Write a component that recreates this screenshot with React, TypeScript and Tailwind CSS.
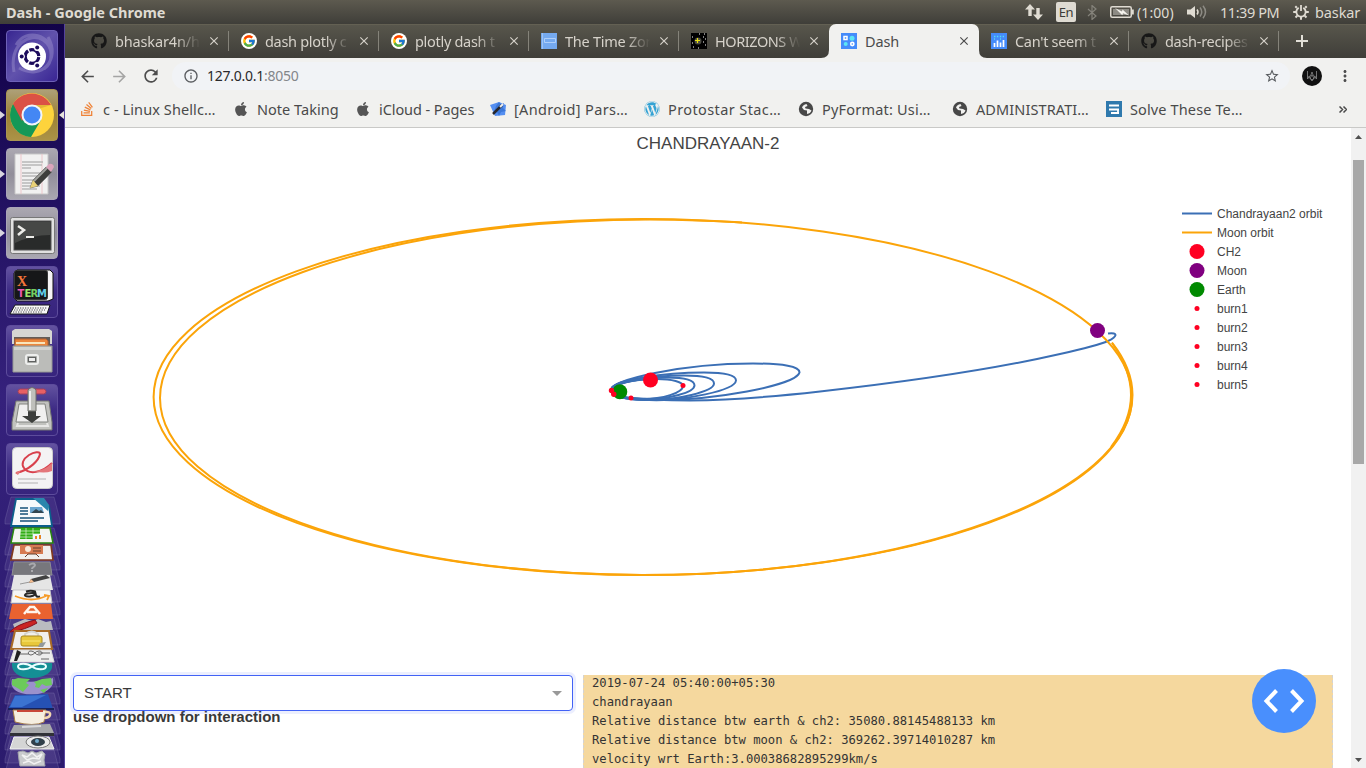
import type { ReactNode } from "react";
import { FaApple, FaGithub, FaStackOverflow, FaWordpress } from "react-icons/fa";
import { FcGoogle } from "react-icons/fc";
import {
  MdArrowBack,
  MdArrowForward,
  MdClose,
  MdInfoOutline,
  MdMoreVert,
  MdRefresh,
  MdStarBorder,
} from "react-icons/md";

/* ---------- system bar ---------- */

function SystemBar() {
  return (
    <header className="flex h-6 shrink-0 items-center bg-gradient-to-b from-[#5d5a4f] to-[#3f3e39] pl-1.5 text-[14px] leading-[23px] text-[#dfdbd2]">
      <span className="w-[400px] text-[14.500px] font-bold tracking-[0px]">Dash - Google Chrome</span>
      <div className="ml-auto flex items-center whitespace-nowrap">
        <svg className="mr-[13px] h-[16px] w-[18px]" viewBox="0 0 18 16" fill="#dfdbd2">
          <path d="M5 0 10 5.500H6.700V12H3.300V5.500H0z" />
          <path d="M13 16 8 10.500h3.300V4h3.400v6.500H18z" />
        </svg>
        <span className="mr-[11px] flex h-5 w-5 items-center justify-center rounded-[2px] bg-[#dfdbd2] text-[13px] tracking-[-0.5px] text-[#3c3b37]">En</span>
        <svg className="mr-[13px] h-[15px] w-[10px]" viewBox="0 0 10 15" fill="none" stroke="#85837b" strokeWidth="1.200"><path d="m1 4 8 7-4 3.500V.5L9 4l-8 7" /></svg>
        <svg className="mr-[3px] h-3 w-6" viewBox="0 0 24 12">
          <rect x=".75" y=".75" width="20.500" height="10.500" rx="1.500" fill="none" stroke="#dfdbd2" strokeWidth="1.500" />
          <rect x="3" y="3" width="16" height="6" fill="#8d8b84" />
          <rect x="22" y="3.500" width="1.800" height="5" fill="#dfdbd2" />
          <path d="m5 2 7 3.400.5-2L19 9.500l-6-2.300-.7 2z" fill="#f6f4ee" />
        </svg>
        <span className="w-[50px] text-[14px] tracking-[0.1px]">(1:00)</span>
        <svg className="mr-[13px] h-[14px] w-5" viewBox="0 0 20 14">
          <path d="M0 4.500h3.500L8 1v12L3.500 9.500H0z" fill="#dfdbd2" />
          <path d="M10 4.500q2 2.500 0 5" fill="none" stroke="#dfdbd2" strokeWidth="1.500" />
          <path d="M13 2.500q3.500 4.500 0 9M16 .8q5 6.200 0 12.400" fill="none" stroke="#8d8b84" strokeWidth="1.500" />
        </svg>
        <span className="w-[73px] text-[14.500px] tracking-[-0.45px]">11:39 PM</span>
        <svg className="mr-[6px] h-4 w-4" viewBox="0 0 16 16" fill="none" stroke="#dfdbd2">
          <path d="M5.700 3.900a4.700 4.700 0 1 0 4.600 0" strokeWidth="1.900" />
          <path d="M8 1v6" strokeWidth="1.800" />
          <path d="M3.800 3.800 2.300 2.300M12.200 3.800l1.500-1.500M3 8H.2M13 8h2.800M4.300 11.700l-1.800 1.800M11.700 11.700l1.800 1.800M8 13v2.800" strokeWidth="2" />
        </svg>
        <span className="w-[51px] text-[14.500px] tracking-[-0.1px]">baskar</span>
      </div>
    </header>
  );
}

/* ---------- launcher ---------- */

function Tile({ tone, left, right, children }: { tone: string; left?: boolean; right?: boolean; children: ReactNode }) {
  return (
    <div className="flex h-[52px] shrink-0 items-center">
      <span className="w-1.5 text-[#d8d5df]">
        {left && (
          <svg className="h-2 w-[5px]" viewBox="0 0 5 8">
            <path d="M0 0 5 4 0 8z" fill="currentColor" />
          </svg>
        )}
      </span>
      <div className={"h-[52px] w-[52px] overflow-hidden rounded-[4px] border " + tone}>
        <svg className="h-[50px] w-[50px]" viewBox="1 1 50 50">
          {children}
        </svg>
      </div>
      {right && (
        <svg className="ml-[1px] h-2 w-[5px]" viewBox="0 0 5 8">
          <path d="M5 0 0 4l5 4z" fill="#e7e4dc" />
        </svg>
      )}
    </div>
  );
}

const plain = "border-[#5d4c9c] bg-gradient-to-b from-[#6352a0] via-[#3d2a84] to-[#37247d]";
const silver = "border-[#aaa5b8] bg-gradient-to-b from-[#aba8b1] via-[#918e9a] to-[#aaa8b1]";

function LauncherStack() {
  const tops = [0, 31, 46, 63, 78, 91, 105, 121, 134, 151, 163, 180, 196, 210, 226, 239, 253];
  return (
    <svg className="h-[272px] w-[64px] shrink-0" viewBox="0 496 64 272">
      {tops.map((t) => (
        <path key={t} d={`M11 ${497 + t}H54L60 ${520 + t}V${524 + t}H5V${520 + t}Z`} fill="#7b70b0" fillOpacity=".2" stroke="#9b92c4" strokeOpacity=".25" />
      ))}
      <path d="M16 499h24l9 7 3 20H11z" fill="#f7f9fb" stroke="#0b5e8b" strokeWidth="1.800" />
      <path d="M33 498h11l5 7-1 6z" fill="#2b86ac" />
      <path d="M20 508h8M20 511h8M20 514h8M20 518h24M20 521h18" stroke="#17517a" strokeWidth="1.300" />
      <path d="M30 507h12l2 6H30z" fill="#6ba5cf" /><path d="m31 513 5-4 3 2 2-1 3 3z" fill="#324651" />
      <path d="M14 528h36l3 15H11z" fill="#f3f5f0" stroke="#28870d" strokeWidth="1.500" />
      <path d="M21 528h19v11H20z" fill="#30ad15" /><path d="M20 531h20M20 534h20M20 537h20M26 528v11M33 528v11" stroke="#dff5d9" strokeWidth=".7" />
      <path d="M33 534h10v6H33z" fill="#edf6ff" /><path d="M35 539v-3h2v3zM39 539v-4h2v4z" fill="#e68621" />
      <path d="M14 545h37l2 15H11z" fill="#f1eeec" stroke="#81391e" strokeWidth="1.700" />
      <path d="M20 545h23v9H20z" fill="#d77a51" /><circle cx="28" cy="549" r="3" fill="#fae8d9" /><path d="M33 548h8M33 551h8M25 557l3-3h8l3 3" stroke="#68402d" fill="none" />
      <path d="M14 562h36l2 13H12z" fill="#77777c" stroke="#8d8d93" /><path d="M29 565q5-3 6 0c0 2-3 2-3 4m0 1v2" fill="none" stroke="#a9a9ad" strokeWidth="2" />
      <path d="M14 575h36l3 15H11z" fill="#e5e5e5" /><path d="m20 584 10-2" stroke="#999" /><path d="m29 583 2-4 15-4 4 3-16 4z" fill="#414141" /><path d="m29 583 2-4 3 3z" fill="#f4bc8f" />
      <path d="M13 590h37l2 13H11z" fill="#f5f5f5" stroke="#c5c5c7" />
      <path d="M26 591.500q5-1.500 9 0l1 4q1 2 4 1M35 593c-6-.5-11 1-10 2.500 2 2 8 1 10-1" fill="none" stroke="#282828" strokeWidth="2" />
      <path d="M15 596q17 7 31 0m-2-1 5 1-2 4" fill="none" stroke="#f69b28" strokeWidth="1.800" />
      <path d="M12 604h39l2 15H9z" fill="#e96230" /><path d="m24 614 6-7h4l6 7M27 612h10" fill="none" stroke="#fff5ec" strokeWidth="2.500" />
      <path d="m13 624 12-5 8 2 5-2 8 3 5-1 2 9H15z" fill="#b9bbc0" /><path d="m10 632q5-7 25-12l2 3q-12 7-27 9z" fill="#ca2424" stroke="#851220" />
      <path d="M15 631h34l3 18H11z" fill="#f1efeb" stroke="#a96b26" strokeWidth="2" /><path d="M25 639v-5q7-5 13 0v5" fill="none" stroke="#d4d4ce" strokeWidth="2" /><rect x="21" y="636" width="21" height="10" rx="2" fill="#e8c83c" stroke="#a9871c" /><path d="M22 641h18" stroke="#f8e774" /><path d="m40 643 6-1-3 5h-5z" fill="#92999c" />
      <path d="M14 650h37l3 12H10z" fill="#ededed" stroke="#d9d9d9" /><path d="m14 661 3-11 4 2-4 9z" fill="#202020" /><path d="M20 654h9M38 653h12M41 659h8M31 651c-4 0-3 4 0 4s4-4 8-4 4 4 0 4-4-4-8-4" stroke="#444" fill="none" strokeWidth=".8" />
      <path d="M12 663h40q2 10-12 14-8 2-17 0-12-4-11-14z" fill="#148e95" /><path d="M32 666.500c-5-4-14-3.500-14 0s9 4 14 0c5-4 14-3.500 14 0s-9 4-14 0z" fill="none" stroke="#eaffff" strokeWidth="2" />
      <path d="M12 679q20 6 41-1 2 10-11 15-10 3-21 0-12-4-9-14z" fill="#9b91cc" /><path d="m12 680 6-2 12 1-4 4 3 2-6 7-4-3-7-4zm22 2 8-3 9-1 1 7-6 1-4-2-3 4-4-1 1-3zM40 690l8-2-4 5z" fill="#6cca5b" />
      <path d="m15 695 33-1 5 15H8z" fill="#2551b4" /><path d="m15 696 31-1-24 12H10z" fill="#3b73d2" /><path d="M8 708h46v2H8z" fill="#17215a" />
      <path d="M13 710h33l-2 12q-10 5-29 0z" fill="#f5eee0" stroke="#a67b45" /><path d="M45 712c8-1 6 6-1 6" fill="none" stroke="#f3d7b0" strokeWidth="2.500" /><path d="M17 711h26" stroke="#c84637" strokeWidth="2" />
      <path d="m14 725 36-1 4 9H10z" fill="#a7a8ab" /><path d="M10 733h44v3H10z" fill="#303137" /><path d="m22 727 19-1" stroke="#d9d9db" strokeWidth="2" />
      <path d="M14 737h35l5 12H10z" fill="#d5d5d5" stroke="#f2f2f2" /><ellipse cx="38" cy="742" rx="12" ry="6" fill="#ececec" stroke="#797979" /><ellipse cx="38" cy="742" rx="7" ry="4" fill="#303f4a" /><circle cx="37" cy="741" r="2" fill="#6fa9cb" />
      <path d="m18 752 5-1 5 2 4-2 4 2 6-2 3 3-1 6 1 6H20l-1-6z" fill="#c9cbcd" stroke="#a2a5ac" /><path d="m22 755 5 2 5-4 5 4 5-3-3 5-6-1-6 2zM23 763l6-2 5 3 7-3" fill="none" stroke="#f2f3f3" strokeWidth="1.500" />
    </svg>
  );
}

function Launcher() {
  return (
    <aside className="flex w-[65px] shrink-0 flex-col gap-[7px] overflow-hidden border-r border-[#54429c] bg-gradient-to-b from-[#120349] via-[#35217c] to-[#2b1b6d] pt-1.5">
      <Tile tone="border-[#6e61b8] bg-gradient-to-br from-[#392691] via-[#6152ac] to-[#3a2494]">
        <path d="M8 42C3 14 24 2 37 10c11 7 10 23 1 29M42 7C55 29 36 51 13 38M10 15C20-3 46 5 46 24" fill="none" stroke="#9d92cf" strokeWidth="3" opacity=".45" />
        <circle cx="26" cy="26.500" r="14" fill="#fff" />
        <circle cx="26" cy="26.500" r="6.800" fill="none" stroke="#1c0b5c" strokeWidth="3.200" strokeDasharray="12.800 1.440" strokeDashoffset="-0.7" />
        <circle cx="16" cy="26.500" r="2.900" fill="#fff" /><circle cx="31" cy="18" r="2.900" fill="#fff" /><circle cx="31" cy="35" r="2.900" fill="#fff" />
        <circle cx="15.700" cy="26.500" r="2" fill="#1c0b5c" /><circle cx="31.200" cy="17.500" r="2" fill="#1c0b5c" /><circle cx="31.200" cy="35.500" r="2" fill="#1c0b5c" />
      </Tile>
      <Tile tone="border-[#a99553] bg-gradient-to-b from-[#ada078] via-[#9c8134] to-[#ab9347]" left right>
        <circle cx="26" cy="26" r="22" fill="#fdd33c" />
        <path d="M26 26 7 15a22 22 0 0 0 18 33l10-17z" fill="#159857" />
        <path d="M7 15a22 22 0 0 1 38 1H26l-10 16z" fill="#db5145" />
        <path d="M45 16H26v6z" fill="#bd8d2c" opacity=".4" />
        <circle cx="26" cy="26" r="10.500" fill="#f3f5f8" /><circle cx="26" cy="26" r="8.500" fill="#4487f4" />
      </Tile>
      <Tile tone={silver} left>
        <path d="M9 6h33v40H9z" fill="#f1f1f1" stroke="#c7c7c7" />
        <path d="M15 6v40M36 6v40" stroke="#efbec3" strokeWidth=".8" />
        <path d="M16 14h21M16 17h20M16 20h9M16 25h21M16 28h18M16 32h13M16 35h19M16 38h18M16 41h15" stroke="#b8b8b8" strokeWidth="1.300" />
        <path d="m24 40 3-8 13-13 6 5-14 14z" fill="#3d3e3b" stroke="#777" strokeWidth=".8" /><path d="m28 33 13-13" stroke="#a0a19d" strokeWidth="2" />
        <path d="m40 19 3-3q4-1 5 3l-3 5z" fill="#dba4bc" /><path d="m24 40 3-8 5 6z" fill="#e9d277" />
      </Tile>
      <Tile tone={silver} left>
        <rect x="4.500" y="10.500" width="44" height="36" rx="2" fill="#e1e1e0" stroke="#777" /><rect x="8" y="14" width="37" height="29" fill="#292b2a" stroke="#555" />
        <path d="M9 15h35v13q-18 0-35 8z" fill="#464846" /><path d="m12 19 6 4-6 5" fill="none" stroke="#ecece8" strokeWidth="2.500" /><path d="M20 30h8" stroke="#ecece8" strokeWidth="2" />
      </Tile>
      <Tile tone={plain}>
        <path d="M11 4h33l3 3v26l-5 2H11l-3-3V7z" fill="#f5f4f5" stroke="#111" /><rect x="8.500" y="4.500" width="33" height="29" rx="2" fill="#161718" stroke="#383838" />
        <text x="11" y="20" fill="#f6773a" fontFamily="Liberation Serif" fontSize="14" fontWeight="bold">X</text>
        <text y="30.500" fontFamily="DejaVu Sans" fontSize="10" fontWeight="bold"><tspan x="11.500" fill="#ee57b5">T</tspan><tspan x="18.500" fill="#a0e66c">E</tspan><tspan x="24.500" fill="#73ce61">R</tspan><tspan x="31" fill="#63cfe8">M</tspan></text>
        <path d="M9 39h35l-3 9H4z" fill="#f9f9f7" stroke="#17181a" /><path d="M9 42h32M8 44h31M7 46h30" stroke="#46464d" strokeDasharray="1.300 1.200" />
      </Tile>
      <Tile tone={plain}>
        <path d="m6 6 3-2h34l3 2v13H6z" fill="#d6d6d2" /><path d="M8 12h36v10H8z" fill="#625d58" /><path d="M9 14h31l2 2v6H9z" fill="#eb873b" stroke="#b86330" /><path d="M10 18h29" stroke="#f9e5bb" strokeWidth="2" />
        <path d="M7 21h39v26H7z" fill="#bbbcb9" stroke="#969894" /><path d="M8 22h37v3H8z" fill="#d2d3cf" />
        <rect x="20" y="30" width="12" height="9" rx="2" fill="#a8aaa7" stroke="#edeeed" strokeWidth="2" /><rect x="22.500" y="32.500" width="7" height="4" fill="#eee" stroke="#5f6160" />
      </Tile>
      <Tile tone={plain}>
        <path d="M10 17h33l3 21v8H6v-8z" fill="#c1c2be" stroke="#747672" /><path d="M13 20h26l3 18H10z" fill="#f0f0ef" stroke="#828480" />
        <rect x="12" y="5" width="28" height="5" rx="2.500" fill="#e86164" stroke="#a33f5d" /><path d="M22 25h8v7h5l-9 7-10-7h6z" fill="#3c3e3b" /><path d="M22 6q4-5 8 0v21h-8z" fill="#bfc0bb" stroke="#6e706b" /><path d="M24 7v19" stroke="#eee" strokeWidth="2" />
        <path d="m12 39-1 3h31l-1-3" fill="none" stroke="#e8e8e6" strokeWidth="2" />
      </Tile>
      <Tile tone={plain}>
        <rect x="6.500" y="4.500" width="40" height="41" rx="4" fill="#f4f3f4" stroke="#ccc" /><path d="M12 36h28M12 40h20" stroke="#c8c8c8" strokeWidth="1.300" />
        <path d="M10 30C24 27 33 17 34 11c0-3-6-2-11 1-6 4-8 9-5 13 5 7 18 5 28-5" fill="none" stroke="#d8404c" strokeWidth="2" />
        <path d="m9 30 6-3-3 5zM28 28q10 0 18-8v8q-8 3-18 0z" fill="#e4777b" />
      </Tile>
      <div className="-mt-[6px] shrink-0"><LauncherStack /></div>
    </aside>
  );
}

/* ---------- browser chrome ---------- */

const GoogleMark = () => (
  <span className="flex h-4 w-4 items-center justify-center rounded-full bg-white"><FcGoogle className="h-[14px] w-[14px]" /></span>
);
const Globe = () => (
  <svg className="h-4 w-4" viewBox="0 0 16 16">
    <circle cx="8" cy="8" r="7.200" fill="#484848" />
    <path d="M8.500 3q-3.500.5-4.500 3.500l2 2.500 3 .5V13q3.500-.5 4.500-3.500L11 8 7.500 7.500 7 6l2.500-1z" fill="#f1f1ef" />
  </svg>
);
const BlueBook = () => (
  <svg className="h-4 w-4" viewBox="0 0 16 16"><path fill="#75aaf0" d="M0 0h16v16H0z" /><path d="M1.500 0v16" stroke="#9dc4f6" /><path d="M3.500 5.500h11v4h-11z" fill="none" stroke="#b0d0fa" /></svg>
);
const StarField = () => (
  <svg className="h-4 w-4" viewBox="0 0 16 16"><path fill="#000" d="M0 0h16v16H0z" /><circle cx="7" cy="8" r="3.500" fill="#4b4b44" /><path d="M6.500 5v5M4 7.500h5" stroke="#e8e213" strokeWidth="1.200" /><path d="M1 4h1M8 1h1M13 1h1M12 4h1M14 6h1M12 9h1M2 14h1M7 15h1M14 12h1M1 10h1" stroke="#fff" /></svg>
);
const DashMark = () => (
  <svg className="h-4 w-4" viewBox="0 0 16 16"><path fill="#458bfa" d="M0 0h16v16H0z" /><path d="M3 3.500h3V6.500H3z" fill="none" stroke="#fff" strokeWidth="1.500" /><circle cx="11" cy="5.200" r="2.500" fill="#5be5f5" /><circle cx="4.700" cy="11" r="2" fill="#5be5f5" /><circle cx="11.300" cy="11" r="1.600" fill="none" stroke="#fff" strokeWidth="1.600" /></svg>
);
const PlotlyMark = () => (
  <svg className="h-4 w-4" viewBox="0 0 16 16"><path fill="#458bfa" d="M0 0h16v16H0z" /><path d="M3.500 14v-4M6.500 14V7.500M9.500 14V9.500M12.500 14V7" stroke="#fff" strokeWidth="1.700" /><path d="M3 3.500h10M3 6h1M9 6h1" stroke="#56dcf5" strokeWidth="1.300" strokeDasharray="1.400 1.500" /></svg>
);

function Tab({ icon, title, active, track, divider }: { icon: ReactNode; title: string; active?: boolean; track: string; divider?: boolean }) {
  return (
    <div className={"relative flex h-[34px] w-[150px] shrink-0 items-center pl-3 " + (active ? "z-10 rounded-t-[7px] bg-[#f1f1ef] text-[#4b4b4b]" : "text-[#d6d2ca]")}>
      {active && (
        <>
          <svg className="absolute -left-2 bottom-0 h-2 w-2" viewBox="0 0 8 8"><path d="M8 0v8H0q8 0 8-8" fill="#f1f1ef" /></svg>
          <svg className="absolute -right-2 bottom-0 h-2 w-2" viewBox="0 0 8 8"><path d="M0 0v8h8Q0 8 0 0" fill="#f1f1ef" /></svg>
        </>
      )}
      <span className="flex w-6 shrink-0">{icon}</span>
      <span className={"mb-px w-[87px] whitespace-nowrap text-[14.500px] leading-5 " + track + (active ? "" : " [mask-image:linear-gradient(90deg,#000_70%,transparent_98%)]")}>{title}</span>
      <MdClose className="ml-[5px] h-[14px] w-[14px] shrink-0" />
      {divider && <span className="ml-auto h-5 w-px bg-[#85837a]" />}
    </div>
  );
}

function TabStrip() {
  return (
    <div className="flex h-[34px] shrink-0 border-t border-[#636053] bg-gradient-to-b from-[#58564c] to-[#3f3e39] pl-[14px]">
      <div className="-mt-px flex">
        <Tab icon={<FaGithub className="h-4 w-4 text-[#171717]" />} title="bhaskar4n/h" track="tracking-[-0.15px]" divider />
        <Tab icon={<GoogleMark />} title="dash plotly c" track="tracking-[-0.3px]" divider />
        <Tab icon={<GoogleMark />} title="plotly dash t" track="tracking-[-0.3px]" divider />
        <Tab icon={<BlueBook />} title="The Time Zor" track="tracking-[-0.25px]" divider />
        <Tab icon={<StarField />} title="HORIZONS W" track="tracking-[-0.45px]" />
        <Tab icon={<DashMark />} title="Dash" track="tracking-[-0.1px]" active />
        <Tab icon={<PlotlyMark />} title="Can't seem t" track="tracking-[-0.3px]" divider />
        <Tab icon={<FaGithub className="h-4 w-4 text-[#171717]" />} title="dash-recipes" track="tracking-[-0.3px]" divider />
      </div>
      <svg className="ml-[17px] mt-[10px] h-3 w-3" viewBox="0 0 12 12"><path d="M6 0v12M0 6h12" stroke="#e2dfd7" strokeWidth="2" /></svg>
    </div>
  );
}

function Toolbar() {
  return (
    <div className="flex h-9 shrink-0 items-center bg-[#f1f1ef] pl-[13px] text-[#4d4d4d]">
      <MdArrowBack className="h-[19px] w-[19px]" />
      <MdArrowForward className="ml-[13px] h-[19px] w-[19px] text-[#a5a5a4]" />
      <MdRefresh className="ml-[12px] h-5 w-5" />
      <div className="ml-[11px] flex h-7 w-[1118px] items-center rounded-full bg-[#f1f3f6] pl-[11px] pr-[10px]">
        <MdInfoOutline className="h-4 w-4 text-[#5a5d61]" />
        <span className="ml-[8px] text-[14px] leading-5 tracking-[-0.25px] text-[#29292b]">127.0.0.1<span className="text-[#83868a]">:8050</span></span>
        <MdStarBorder className="ml-auto h-4 w-4 text-[#56595d]" />
      </div>
      <svg className="ml-[12px] h-5 w-5" viewBox="0 0 20 20"><circle cx="10" cy="10" r="10" fill="#111" /><path d="M5.500 5v8l4-5 .5-2 .5 2 4 5V5M5.500 10l4.500 4 4.500-4M8 12l2-3 2 3-2 3z" fill="none" stroke="#8d8d8d" strokeWidth=".8" /></svg>
      <MdMoreVert className="ml-[14px] h-[18px] w-[18px]" />
    </div>
  );
}

function Bookmark({ icon, title, box }: { icon: ReactNode; title: string; box: string }) {
  return (
    <div className={"flex shrink-0 items-center whitespace-nowrap " + box}>
      <span className="flex w-6 shrink-0">{icon}</span>
      <span>{title}</span>
    </div>
  );
}

function BookmarkBar() {
  return (
    <div className="flex h-[34px] shrink-0 items-center border-b border-[#c9c9c7] bg-[#f1f1ef] pb-[3px] pl-[14px] text-[14.500px] leading-5 text-[#4a4a4a]">
      <Bookmark icon={<FaStackOverflow className="h-4 w-4 text-[#ef8236]" />} title="c - Linux Shellc…" box="w-[154px] tracking-[0.1px]" />
      <Bookmark icon={<FaApple className="h-4 w-4 text-[#555]" />} title="Note Taking" box="w-[122px] tracking-[0.02px]" />
      <Bookmark icon={<FaApple className="h-4 w-4 text-[#555]" />} title="iCloud - Pages" box="w-[135px] tracking-[-0.08px]" />
      <Bookmark
        icon={<svg className="h-4 w-4" viewBox="0 0 16 16"><path d="m0 4 9-3 7 3-1 10-10 1z" fill="#558ff1" /><path d="m6 5 3-4 2 3 3-2-1 5 3 3-5 1-2 4-2-4-4 2 2-5z" fill="#3b77d8" /><path d="M3 13 12 4" stroke="#26262b" strokeWidth="2.500" /><path d="m10 6 3-3" stroke="#eee" strokeWidth="2" /></svg>}
        title="[Android] Pars…"
        box="w-[154px] tracking-[0.35px]"
      />
      <Bookmark icon={<FaWordpress className="h-4 w-4 text-[#35a3d4]" />} title="Protostar Stac…" box="w-[154px] tracking-[0.4px]" />
      <Bookmark icon={<Globe />} title="PyFormat: Usi…" box="w-[154px] tracking-[0.2px]" />
      <Bookmark icon={<Globe />} title="ADMINISTRATI…" box="w-[154px] tracking-[0.1px]" />
      <Bookmark icon={<svg className="h-4 w-4" viewBox="0 0 16 16"><path d="M0 0h16v16H0z" fill="#2f79ad" /><path d="M3 4.500h10M3 8.500h10M5 12h8M12 8v4" stroke="#fff" strokeWidth="1.800" /></svg>} title="Solve These Te…" box="w-[154px] tracking-[0.13px]" />
      <svg className="ml-auto mr-[19px] h-[7px] w-[8px]" viewBox="0 0 8 7" fill="none" stroke="#4a4a4a" strokeWidth="1.500"><path d="m.5.5 3 3-3 3M4.500.5l3 3-3 3" /></svg>
    </div>
  );
}

/* ---------- dashboard ---------- */

const legend = [
  { label: "Chandrayaan2 orbit", color: "#3b6fb5", r: 0 },
  { label: "Moon orbit", color: "#fba409", r: 0 },
  { label: "CH2", color: "#ff0022", r: 7.5 },
  { label: "Moon", color: "#800080", r: 7.5 },
  { label: "Earth", color: "#008a00", r: 7.5 },
  { label: "burn1", color: "#ff0022", r: 2.5 },
  { label: "burn2", color: "#ff0022", r: 2.5 },
  { label: "burn3", color: "#ff0022", r: 2.5 },
  { label: "burn4", color: "#ff0022", r: 2.5 },
  { label: "burn5", color: "#ff0022", r: 2.5 },
];

function OrbitChart() {
  return (
    <svg className="h-[547px] w-[1286px] shrink-0 [font-family:'Liberation_Sans',sans-serif]" viewBox="65 128 1286 547">
      <text x="708" y="149" textAnchor="middle" fontSize="17" fill="#444">CHANDRAYAAN-2</text>
      <g fill="none" stroke="#3b6fb5" strokeWidth="2">
        <path d="M611 390C612 384 635 379 657 379 672 379 683 382 683 386 683 393 662 399 643 399 624 399 610 395 611 390" />
        <path d="M611 390C612 383 644 377.500 667 377.500 684 377.500 694.500 380 694.500 385.500 694 393 668 399 647 399 625 399 610 396 611 390" />
        <path d="M611 390C612 381 655 375.500 684 375.500 703 375.500 714 378 714 383.500 714 392 675 400 650 400 625 400 610 396 611 390" />
        <path d="M611 390C612 380 665 372.500 704 372.500 725 372.500 736 375 736 380.500 735 391 683 400.500 652 400 625 400 610 396 611 390" />
        <path d="M611 390C612 380 680 363.500 753 363.500 783 363.500 800 366.500 799.500 372.500 796 386 710 400.500 658 400 627 400 610 396 611 390" />
        <path d="M611 390C610 397 640 400.500 690 400.500 740 400 780 396 820 391.500 900 382.500 990 370 1060 354 1080 349.500 1100 344.500 1108 341 1117 337 1119 332 1108 333.500" />
      </g>
      <path d="M612 388C617 382 632 379.500 652 378M631 398.500C645 400 665 400 690 398.500" fill="none" stroke="#3b6fb5" strokeWidth="3" />
      <g fill="none" stroke="#fba409" strokeWidth="2">
        <ellipse cx="642.8" cy="397" rx="489.200" ry="178" />
        <path d="M1112 342.500C1125 359 1132.500 377 1132.500 395 1132.500 494 912 575.500 640 575 376 574 160 496 160 398 160 300 378 219.500 650 219.500Q700 220 742 222.500" />
        <path d="M1112 343C1124 360 1131 377 1131 395 1131 413 1124 430 1111 447" />
      </g>
      <circle cx="683" cy="385.500" r="2.500" fill="#ff0022" />
      <circle cx="631" cy="398" r="2.500" fill="#ff0022" />
      <circle cx="650.500" cy="380" r="7.500" fill="#ff0022" />
      <circle cx="1097.500" cy="330.500" r="7.500" fill="#800080" />
      <circle cx="619.800" cy="391.800" r="7.500" fill="#008a00" />
      <circle cx="611.500" cy="390.500" r="2.700" fill="#ff0022" />
      <circle cx="613.800" cy="394.300" r="2.700" fill="#ff0022" />
      {legend.map((item, i) => (
        <g key={item.label}>
          {item.r === 0 ? (
            <path d={`M1182 ${213.500 + i * 19}h30`} stroke={item.color} strokeWidth="2" />
          ) : (
            <circle cx="1197" cy={251.500 + (i - 2) * 19} r={item.r} fill={item.color} />
          )}
          <text x="1217" y={218 + i * 19} fontSize="12" fill="#444">{item.label}</text>
        </g>
      ))}
    </svg>
  );
}

function Dashboard() {
  return (
    <main className="relative flex w-[1286px] shrink-0 flex-col overflow-hidden bg-white text-[#393939] [font-family:'Liberation_Sans',sans-serif]">
      <OrbitChart />
      <div className="flex h-[93px] pl-2">
        <div className="w-[500px] shrink-0">
          <div className="relative z-10 flex h-9 items-center rounded-[4px] border border-[#4262f5] pl-[10px] pr-[10px] shadow-[0_0_0_3px_rgba(66,98,245,0.1)]">
            <span className="text-[15px]">START</span>
            <svg className="ml-auto h-[5px] w-[10px]" viewBox="0 0 10 5"><path d="M0 0h10L5 5z" fill="#999" /></svg>
          </div>
          <p className="-mt-[3px] text-[15px] font-bold leading-[18px]">use dropdown for interaction</p>
        </div>
        <pre className="ml-[10px] w-[750px] border-x border-dashed border-[#d3d3d3] bg-[#f5d89e] pl-2 text-[12.180px] leading-[19px] text-[#333] [font-family:'DejaVu_Sans_Mono',monospace]">
          <span className="-mt-px block">{`2019-07-24 05:40:00+05:30
chandrayaan
Relative distance btw earth & ch2: 35080.88145488133 km
Relative distance btw moon & ch2: 369262.39714010287 km
velocity wrt Earth:3.00038682895299km/s`}</span>
        </pre>
      </div>
      <div className="absolute bottom-[35px] right-[35px] flex h-16 w-16 items-center justify-center rounded-full bg-[#498ffd]">
        <svg className="h-6 w-[42px]" viewBox="0 0 42 24" fill="none" stroke="#fff" strokeWidth="4"><path d="M13.500 1.500 3.500 12l10 10.500M28.500 1.500 38.500 12l-10 10.500" /></svg>
      </div>
    </main>
  );
}

function Scrollbar() {
  return (
    <div className="flex grow flex-col items-center bg-[#f1f1f1]">
      <svg className="mt-[7px] h-1 w-[7px]" viewBox="0 0 7 4"><path d="M0 4h7L3.500 0z" fill="#505050" /></svg>
      <div className="mt-[21px] h-[304px] w-[11px] bg-[#a8a8a8]" />
      <svg className="mb-[6px] mt-auto h-1 w-[7px]" viewBox="0 0 7 4"><path d="M0 0h7L3.500 4z" fill="#505050" /></svg>
    </div>
  );
}

export default function App() {
  return (
    <div className="flex h-[768px] w-[1366px] flex-col overflow-hidden [font-family:'Noto_Sans',sans-serif]">
      <SystemBar />
      <div className="flex min-h-0 grow">
        <Launcher />
        <div className="flex w-[1301px] flex-col">
          <TabStrip />
          <Toolbar />
          <BookmarkBar />
          <div className="flex min-h-0 grow">
            <Dashboard />
            <Scrollbar />
          </div>
        </div>
      </div>
    </div>
  );
}
